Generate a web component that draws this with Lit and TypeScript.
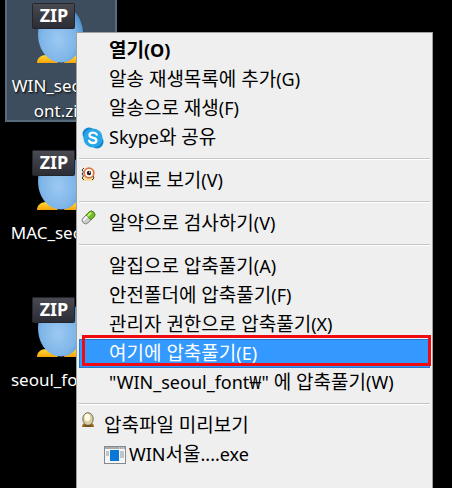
import { LitElement, html, css, nothing, TemplateResult } from "lit";
import { customElement, property } from "lit/decorators.js";

interface Entry {
  text?: string;
  icon?: string;
  bold?: boolean;
  active?: boolean;
  kind?: "preview" | "file";
}

const ENTRIES: Entry[] = [
  { text: "열기(O)", bold: true },
  { text: "알송 재생목록에 추가(G)" },
  { text: "알송으로 재생(F)" },
  { text: "Skype와 공유", icon: "skype" },
  {},
  { text: "알씨로 보기(V)", icon: "eye" },
  {},
  { text: "알약으로 검사하기(V)", icon: "pill" },
  {},
  { text: "알집으로 압축풀기(A)" },
  { text: "안전폴더에 압축풀기(F)" },
  { text: "관리자 권한으로 압축풀기(X)" },
  { text: "여기에 압축풀기(E)", active: true },
  { text: '"WIN_seoul_font₩" 에 압축풀기(W)' },
  {},
  { text: "압축파일 미리보기", icon: "egg", kind: "preview" },
  { text: "WIN서울....exe", icon: "exe", kind: "file" },
];

const ICONS: Record<string, TemplateResult> = {
  skype: html`<svg class="skype" width="22" height="22" viewBox="0 0 22 22" aria-hidden="true">
    <circle cx="7" cy="7" r="6.5" fill="#1686d0" /><circle cx="15" cy="15" r="6.5" fill="#1686d0" />
    <circle cx="11" cy="11" r="9.6" fill="#27a7ea" />
    <path d="M14.7 7.6C14 6.2 12.7 5.7 11 5.7c-2 0-3.5 1-3.5 2.6 0 3.4 6.9 1.9 6.9 4.9 0 1.8-1.6 2.8-3.5 2.8-1.8 0-3.2-.7-3.8-2.2" fill="none" stroke="#fff" stroke-width="2.3" stroke-linecap="round" />
  </svg>`,
  eye: html`<svg class="small" width="15" height="15" viewBox="0 0 15 15" aria-hidden="true">
    <path d="M3 9L1 14h12L12 9z" fill="#f6dfa2" />
    <path d="M3 1L1 3l1.5 2L1 7l1.5 2L1 11l2 2M12 9l1 2-2 2" fill="none" stroke="#3d332b" stroke-width="1" />
    <circle cx="8" cy="6" r="4.8" fill="#fff" stroke="#df7440" stroke-width="1.8" />
    <circle cx="8" cy="6" r="2.2" fill="#2b1713" /><circle cx="8.6" cy="5.3" r=".7" fill="#fff" />
  </svg>`,
  pill: html`<svg class="small" width="15" height="15" viewBox="0 0 15 15" aria-hidden="true">
    <g transform="rotate(-45 7.5 7.5)">
      <rect x="0" y="4" width="15" height="7" rx="3.5" fill="#c9c9c9" stroke="#777" stroke-width=".8" />
      <path d="M7.5 4h4a3.5 3.5 0 0 1 0 7h-4z" fill="#73bd22" stroke="#427c12" stroke-width=".8" />
      <path d="M2.5 6h4" stroke="#fff" stroke-width="1.8" stroke-linecap="round" />
      <path d="M8.5 6h3.5" stroke="#c9ef82" stroke-width="1.8" stroke-linecap="round" />
    </g>
  </svg>`,
  egg: html`<svg class="small" width="14" height="16" viewBox="0 0 14 16" aria-hidden="true">
    <path d="M1 15c0-3 2-4 3-4h6c2 0 3 2 3 4z" fill="#9a6a20" />
    <ellipse cx="7" cy="7" rx="5.2" ry="6.3" fill="#d9cfa0" stroke="#77704f" stroke-width="1" />
    <ellipse cx="6.3" cy="5.5" rx="2.8" ry="3.8" fill="#fffbe6" />
    <path d="M4 14h6" stroke="#4c381c" stroke-width="1" />
  </svg>`,
  exe: html`<svg class="exe" width="22" height="18" viewBox="0 0 22 18" aria-hidden="true">
    <rect x=".5" y=".5" width="21" height="17" fill="#f5f5f5" stroke="#84898e" />
    <path d="M1 2h20" stroke="#a5abb1" stroke-width="2" /><path d="M15 2h5" stroke="#e8e8e8" stroke-dasharray="1 1" />
    <rect x="2" y="5" width="3" height="5" fill="#c1c5c9" /><rect x="16" y="5" width="4" height="7" fill="#c1c5c9" />
    <rect x="6" y="4" width="9" height="11" fill="#0878d8" />
  </svg>`,
};

@customElement("zip-file")
export class ZipFile extends LitElement {
  @property({ type: Array }) lines: string[] = [];
  @property({ type: Boolean, reflect: true }) selected = false;

  static styles = css`
    :host {
      display: block;
      box-sizing: border-box;
      height: 124px;
      margin-bottom: 23px;
      border: 2px solid transparent;
      padding-top: 3px;
      color: #fff;
      text-align: center;
    }
    :host([selected]) {
      background: #3d4d5e;
      border-color: #566b7c;
    }
    .picture {
      display: block;
      margin-left: 25px;
    }
    .zip {
      font: bold 18px/20px "Noto Sans", sans-serif;
    }
    .name {
      font: 17px/25px "Noto Sans", "Noto Sans CJK KR", sans-serif;
      margin-top: 8px;
      text-shadow: 1px 1px 2px #000;
      white-space: nowrap;
    }
    .line {
      display: block;
    }
  `;

  render() {
    return html`
      <svg class="picture" width="60" height="62" viewBox="0 0 60 62" role="img" aria-label="ZIP">
        <defs>
          <radialGradient id="body" cx=".45" cy=".6" r=".6">
            <stop offset="0" stop-color="#9cc9f2" /><stop offset=".65" stop-color="#7eb5e8" /><stop offset="1" stop-color="#4b8fce" />
          </radialGradient>
          <linearGradient id="foot" x2="0" y2="1">
            <stop offset="0" stop-color="#ffda37" /><stop offset="1" stop-color="#f5a40a" />
          </linearGradient>
          <linearGradient id="badge" x2="0" y2="1">
            <stop offset="0" stop-color="#4a4a52" /><stop offset="1" stop-color="#2c2c34" />
          </linearGradient>
        </defs>
        <path d="M5 60c0-5 4-8 9-8s9 3 12 8zM32 60c2-5 6-8 11-8s9 3 9 8z" fill="url(#foot)" />
        <path d="M29 2C41 2 51 16 51 31S42 59.5 29 59.5 6 47 6 31 17 2 29 2z" fill="url(#body)" />
        <rect x=".5" y=".5" width="42" height="25" rx="1" fill="url(#badge)" stroke="#24242b" />
        <text class="zip" x="22" y="19" fill="#fff" text-anchor="middle">ZIP</text>
      </svg>
      <div class="name">${this.lines.map((l) => html`<span class="line">${l}</span>`)}</div>
    `;
  }
}

@customElement("app-root")
export class AppRoot extends LitElement {
  static styles = css`
    :host {
      display: block;
      position: relative;
      min-height: 100vh;
      overflow: hidden;
      background: #000;
    }
    .desktop {
      display: grid;
      grid-template-columns: 112px;
      height: 100vh;
      align-content: start;
      margin-left: 5px;
      overflow: hidden;
    }
    .desktop zip-file:first-child {
      margin-top: -2px;
    }
    .menu {
      position: absolute;
      inset: 32px 19px 0 76px;
      box-sizing: border-box;
      border: solid #a0a0a0;
      border-width: 1px 1px 0 1px;
      background: #efefef;
      padding: 3px 2px;
      overflow: hidden;
    }
    .item {
      position: relative;
      display: flex;
      align-items: center;
      width: 100%;
      height: 29px;
      margin: 0;
      border: 0;
      padding: 0;
      background: none;
      color: #000;
      font: 18px/29px "Noto Sans", "Noto Sans CJK KR", sans-serif;
      text-align: left;
      white-space: nowrap;
    }
    .hangul {
      font-size: 19px;
    }
    .bold {
      font-weight: 700;
    }
    .icon {
      flex: none;
      display: flex;
      width: 30px;
    }
    .small {
      margin: -12px 0 0 2px;
    }
    .skype {
      margin-left: 3px;
    }
    .preview {
      margin-top: 2px;
    }
    .preview .icon {
      width: 25px;
    }
    .file .icon {
      width: 25px;
      margin-left: 25px;
    }
    .active {
      background: #3399ff;
      color: #fff;
      box-shadow: inset 0 0 0 1px #2878d0;
    }
    .active::after {
      content: "";
      position: absolute;
      inset: -4px -1px 2px 3px;
      border: 3px solid #f00a12;
    }
    .rule {
      height: 1px;
      margin: 6px 0;
      border: 0;
      border-top: 1px solid #c5c5c5;
      background: #fff;
    }
  `;

  // Hangul is set one pixel larger than the Latin text beside it.
  private label(text: string) {
    return text
      .split(/([가-힣 ]+)/)
      .filter(Boolean)
      .map((part) => (/[가-힣]/.test(part) ? html`<span class="hangul">${part}</span>` : part));
  }

  private entry(e: Entry) {
    if (!e.text) return html`<hr class="rule" />`;
    return html`<button
      role="menuitem"
      class="item ${e.kind ?? ""} ${e.bold ? "bold" : ""} ${e.active ? "active" : ""}"
    ><span class="icon">${e.icon ? ICONS[e.icon] : nothing}</span><span>${this.label(e.text)}</span></button>`;
  }

  render() {
    return html`
      <main class="desktop">
        <zip-file selected .lines=${["WIN_seoul_f", "ont.zip"]}></zip-file>
        <zip-file .lines=${["MAC_seoul_f"]}></zip-file>
        <zip-file .lines=${["seoul_font.zi"]}></zip-file>
      </main>
      <div class="menu" role="menu">${ENTRIES.map((e) => this.entry(e))}</div>
    `;
  }
}
